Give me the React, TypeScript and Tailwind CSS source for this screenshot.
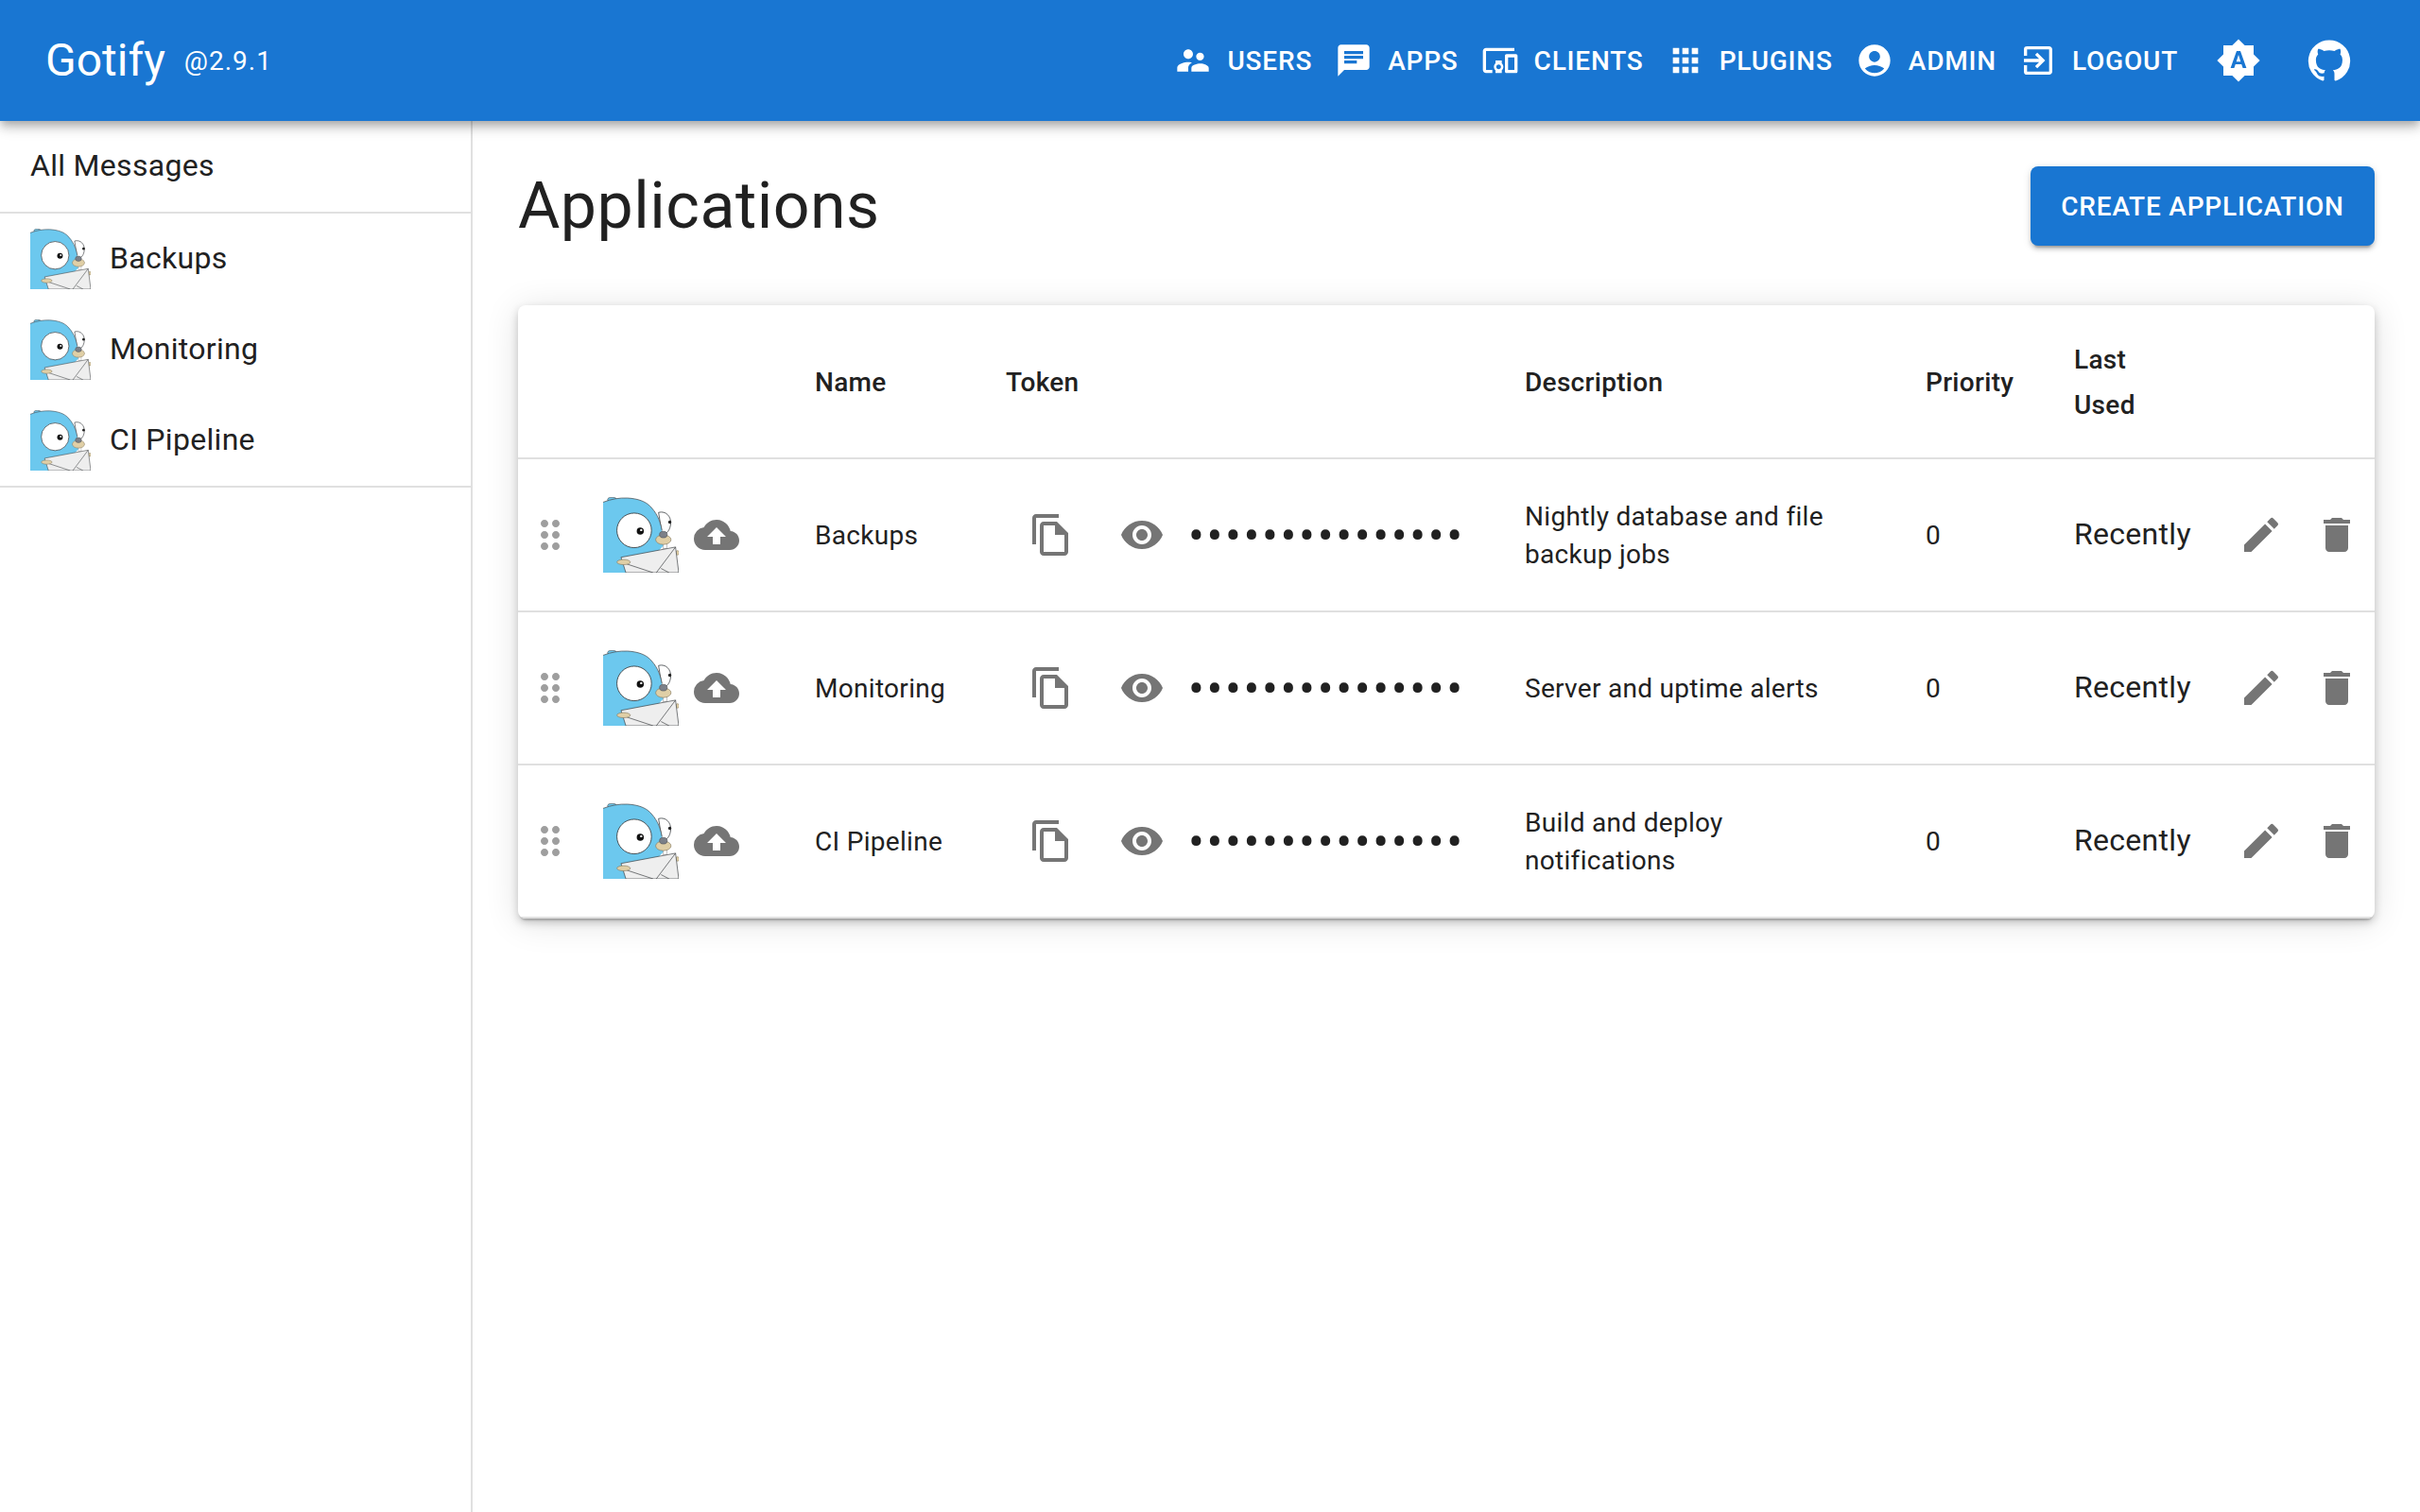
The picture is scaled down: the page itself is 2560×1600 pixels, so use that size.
import { MdSupervisorAccount, MdChat, MdDevicesOther, MdApps, MdAccountCircle, MdExitToApp, MdDragIndicator, MdCloudUpload, MdOutlineFileCopy, MdVisibility, MdEdit, MdDelete } from "react-icons/md";
import type { ReactNode } from "react";

function Gopher({ size }: { size: number }) {
  return (
    <svg width={size} height={size} viewBox="0 0 236 236" className="shrink-0 block">
      <ellipse cx="28" cy="8" rx="14" ry="7" fill="#6cc8ee" stroke="#55585c" strokeWidth="2" />
      <path d="M173 48 C196 42 212 60 211 82 C210 102 198 118 184 116 Z" fill="#fff" stroke="#45484c" strokeWidth="2.5" />
      <circle cx="208" cy="78" r="5" fill="#222" />
      <path d="M0 16 C26 6 50 2 76 3 C110 5 132 14 146 28 C166 48 178 72 184 110 L190 150 L110 236 L0 236 Z" fill="#6cc8ee" />
      <path d="M0 16 C26 6 50 2 76 3 C110 5 132 14 146 28 C166 48 178 72 184 104" fill="none" stroke="#4a4e52" strokeWidth="2.2" />
      <circle cx="97" cy="104" r="54" fill="#fff" stroke="#33363a" strokeWidth="2.5" />
      <circle cx="116" cy="106" r="11" fill="#111" />
      <circle cx="119" cy="103" r="3.5" fill="#fff" />
      <rect x="188" y="146" width="11" height="14" fill="#fff" stroke="#888" strokeWidth="1.5" />
      <ellipse cx="188" cy="133" rx="24" ry="15" fill="#e0cfa6" stroke="#8a7f65" strokeWidth="2" />
      <ellipse cx="188" cy="117" rx="12" ry="10" fill="#7c8088" stroke="#55585c" strokeWidth="2" />
      <ellipse cx="232" cy="174" rx="5" ry="7" fill="#e0cfa6" stroke="#8a7f65" strokeWidth="1.5" />
      <path d="M56 188 L226 156 L236 236 L71 236 Z" fill="#eeeeee" stroke="#3a3d40" strokeWidth="2" strokeLinejoin="round" />
      <path d="M71 208 L156 236 M226 156 L166 236 M181 223 L206 236" fill="none" stroke="#3a3d40" strokeWidth="2" />
      <ellipse cx="64" cy="203" rx="21" ry="8" fill="#e0cfa6" stroke="#8a7f65" strokeWidth="2" />
    </svg>
  );
}

function GitHubIcon({ size }: { size: number }) {
  return (
    <svg width={size} height={size} viewBox="0 0 24 24" fill="currentColor" className="block">
      <path d="M12 1.27a11 11 0 00-3.48 21.46c.55.09.73-.28.73-.55v-1.84c-3.03.64-3.67-1.46-3.67-1.46-.55-1.29-1.28-1.65-1.28-1.65-.92-.65.1-.65.1-.65 1.1 0 1.73 1.1 1.73 1.1.92 1.65 2.57 1.2 3.21.92a2 2 0 01.64-1.47c-2.47-.27-5.04-1.19-5.04-5.5 0-1.1.46-2.1 1.2-2.84a3.76 3.76 0 010-2.93s.91-.28 3.11 1.1c1.8-.49 3.7-.49 5.5 0 2.1-1.38 3.02-1.1 3.02-1.1a3.76 3.76 0 010 2.93c.83.74 1.2 1.74 1.2 2.94 0 4.21-2.57 5.13-5.04 5.4.45.37.82.92.82 2.02v3.03c0 .27.1.64.73.55A11 11 0 0012 1.27" />
    </svg>
  );
}

function AutoIcon({ size }: { size: number }) {
  return (
    <svg width={size} height={size} viewBox="0 0 24 24" fill="currentColor" className="block">
      <path d="M10.85 12.65h2.3L12 9l-1.15 3.65zM20 8.69V4h-4.69L12 .69 8.69 4H4v4.69L.69 12 4 15.31V20h4.69L12 23.31 15.31 20H20v-4.69L23.31 12 20 8.69zM14.3 16l-.7-2h-3.2l-.7 2H7.8L11 7h2l3.2 9h-1.9z" />
    </svg>
  );
}

function NavButton({ icon, label }: { icon: ReactNode; label: string }) {
  return (
    <button className="flex items-center gap-4 pl-2 pr-4 py-3 text-[28px] leading-[49px] font-medium tracking-[0.8px] uppercase text-white">
      {icon}
      <span>{label}</span>
    </button>
  );
}

const nav = [
  { label: "Users", icon: <MdSupervisorAccount size={40} /> },
  { label: "Apps", icon: <MdChat size={40} /> },
  { label: "Clients", icon: <MdDevicesOther size={40} /> },
  { label: "Plugins", icon: <MdApps size={40} /> },
  { label: "admin", icon: <MdAccountCircle size={40} /> },
  { label: "Logout", icon: <MdExitToApp size={40} /> },
];

const sideItems = ["Backups", "Monitoring", "CI Pipeline"];

const rows = [
  { name: "Backups", desc: "Nightly database and file backup jobs" },
  { name: "Monitoring", desc: "Server and uptime alerts" },
  { name: "CI Pipeline", desc: "Build and deploy notifications" },
];

export default function App() {
  return (
    <div className="flex min-h-screen flex-col bg-white font-['Roboto',sans-serif] text-[#212121]">
      <header className="relative z-10 flex h-[128px] items-center justify-between bg-[#1976d2] pl-12 pr-12 text-white shadow-[0_4px_8px_-2px_rgba(0,0,0,0.2),0_8px_10px_rgba(0,0,0,0.14),0_2px_20px_rgba(0,0,0,0.12)]">
        <div className="flex items-center">
          <span className="text-[48px] leading-[64px] font-normal">Gotify</span>
          <span className="ml-5 mt-[1px] text-[28px] leading-[40px] tracking-[1px]">@2.9.1</span>
        </div>
        <nav className="flex items-center">
          {nav.map((n) => (
            <NavButton key={n.label} icon={n.icon} label={n.label} />
          ))}
          <span className="block p-6"><AutoIcon size={48} /></span>
          <span className="block p-6"><GitHubIcon size={48} /></span>
        </nav>
      </header>

      <div className="flex flex-1">
        <aside className="w-[500px] shrink-0 border-r-2 border-[#e0e0e0]">
          <div className="flex h-[98px] items-center border-b-2 border-[#e0e0e0] pb-[2px] pl-8 text-[32px] tracking-[0.3px]">All Messages</div>
          <ul className="border-b-2 border-[#e0e0e0]">
            {sideItems.map((s) => (
              <li key={s} className="flex h-[96px] items-center pl-8 text-[32px] tracking-[0.3px]">
                <Gopher size={64} />
                <span className="ml-5 mb-[2px]">{s}</span>
              </li>
            ))}
          </ul>
        </aside>

        <main className="min-w-0 flex-1 px-12 pt-12">
          <div className="mb-[63px] flex h-[84px] items-center justify-between">
            <h1 className="text-[68px] leading-[84px] font-normal tracking-[0.5px]">Applications</h1>
            <button className="h-[84px] w-[364px] rounded-lg bg-[#1976d2] pt-[1px] text-[28px] font-medium tracking-[0.8px] text-white uppercase shadow-[0_6px_2px_-4px_rgba(0,0,0,0.2),0_4px_4px_rgba(0,0,0,0.14),0_2px_10px_rgba(0,0,0,0.12)]">Create Application</button>
          </div>

          <div className="overflow-hidden rounded-lg bg-white shadow-[0_4px_2px_-2px_rgba(0,0,0,0.2),0_4px_10px_rgba(0,0,0,0.2),0_4px_36px_rgba(0,0,0,0.12)]">
            <table className="w-full table-fixed border-separate border-spacing-0 text-[28px] tracking-[0.3px]">
              <colgroup>
                <col className="w-[68px]" />
                <col className="w-[214px]" />
                <col className="w-[202px]" />
                <col className="w-[549px]" />
                <col className="w-[424px]" />
                <col className="w-[157px]" />
                <col className="w-[190px]" />
                <col className="w-[80px]" />
                <col className="w-[80px]" />
              </colgroup>
              <thead>
                <tr className="h-[163px] text-left text-[28px] leading-[48px] font-medium">
                  <th className="border-b-2 border-[#e0e0e0]" />
                  <th className="border-b-2 border-[#e0e0e0]" />
                  <th className="border-b-2 border-[#e0e0e0] px-8 pt-[2px] font-medium">Name</th>
                  <th className="border-b-2 border-[#e0e0e0] px-8 pt-[2px] font-medium">Token</th>
                  <th className="border-b-2 border-[#e0e0e0] px-8 pt-[2px] font-medium">Description</th>
                  <th className="border-b-2 border-[#e0e0e0] px-8 pt-[2px] font-medium">Priority</th>
                  <th className="border-b-2 border-[#e0e0e0] pl-8 pr-[70px] pt-[2px] font-medium">Last Used</th>
                  <th className="border-b-2 border-[#e0e0e0]" />
                  <th className="border-b-2 border-[#e0e0e0]" />
                </tr>
              </thead>
              <tbody>
                {rows.map((r) => (
                  <tr key={r.name} className="h-[162px]">
                    <td className="border-b-2 border-[#e0e0e0] pl-[10px]"><MdDragIndicator size={48} className="text-[#9e9e9e]" /></td>
                    <td className="border-b-2 border-[#e0e0e0]">
                      <div className="flex items-center pl-[22px]">
                        <Gopher size={80} />
                        <MdCloudUpload size={48} className="ml-[16px] text-[#757575]" />
                      </div>
                    </td>
                    <td className="border-b-2 border-[#e0e0e0] px-8 pt-[2px] leading-[40px]">{r.name}</td>
                    <td className="border-b-2 border-[#e0e0e0] pl-[56px]">
                      <div className="flex items-center">
                        <MdOutlineFileCopy size={48} className="text-[#757575]" />
                        <MdVisibility size={48} className="ml-[48px] text-[#757575]" />
                        <span className="ml-[25px] h-[48px] text-[50px] leading-[50px] tracking-[2.65px] whitespace-nowrap">•••••••••••••••</span>
                      </div>
                    </td>
                    <td className="border-b-2 border-[#e0e0e0] px-8 pt-[2px] leading-[40px]">{r.desc}</td>
                    <td className="border-b-2 border-[#e0e0e0] px-8 pt-[2px] leading-[40px]">0</td>
                    <td className="border-b-2 border-[#e0e0e0] px-8 pb-[2px] text-[32px] whitespace-nowrap">Recently</td>
                    <td className="border-b-2 border-[#e0e0e0] text-center"><MdEdit size={48} className="mx-auto text-[#757575]" /></td>
                    <td className="border-b-2 border-[#e0e0e0] text-center"><MdDelete size={48} className="mx-auto text-[#757575]" /></td>
                  </tr>
                ))}
              </tbody>
            </table>
          </div>
        </main>
      </div>
    </div>
  );
}
